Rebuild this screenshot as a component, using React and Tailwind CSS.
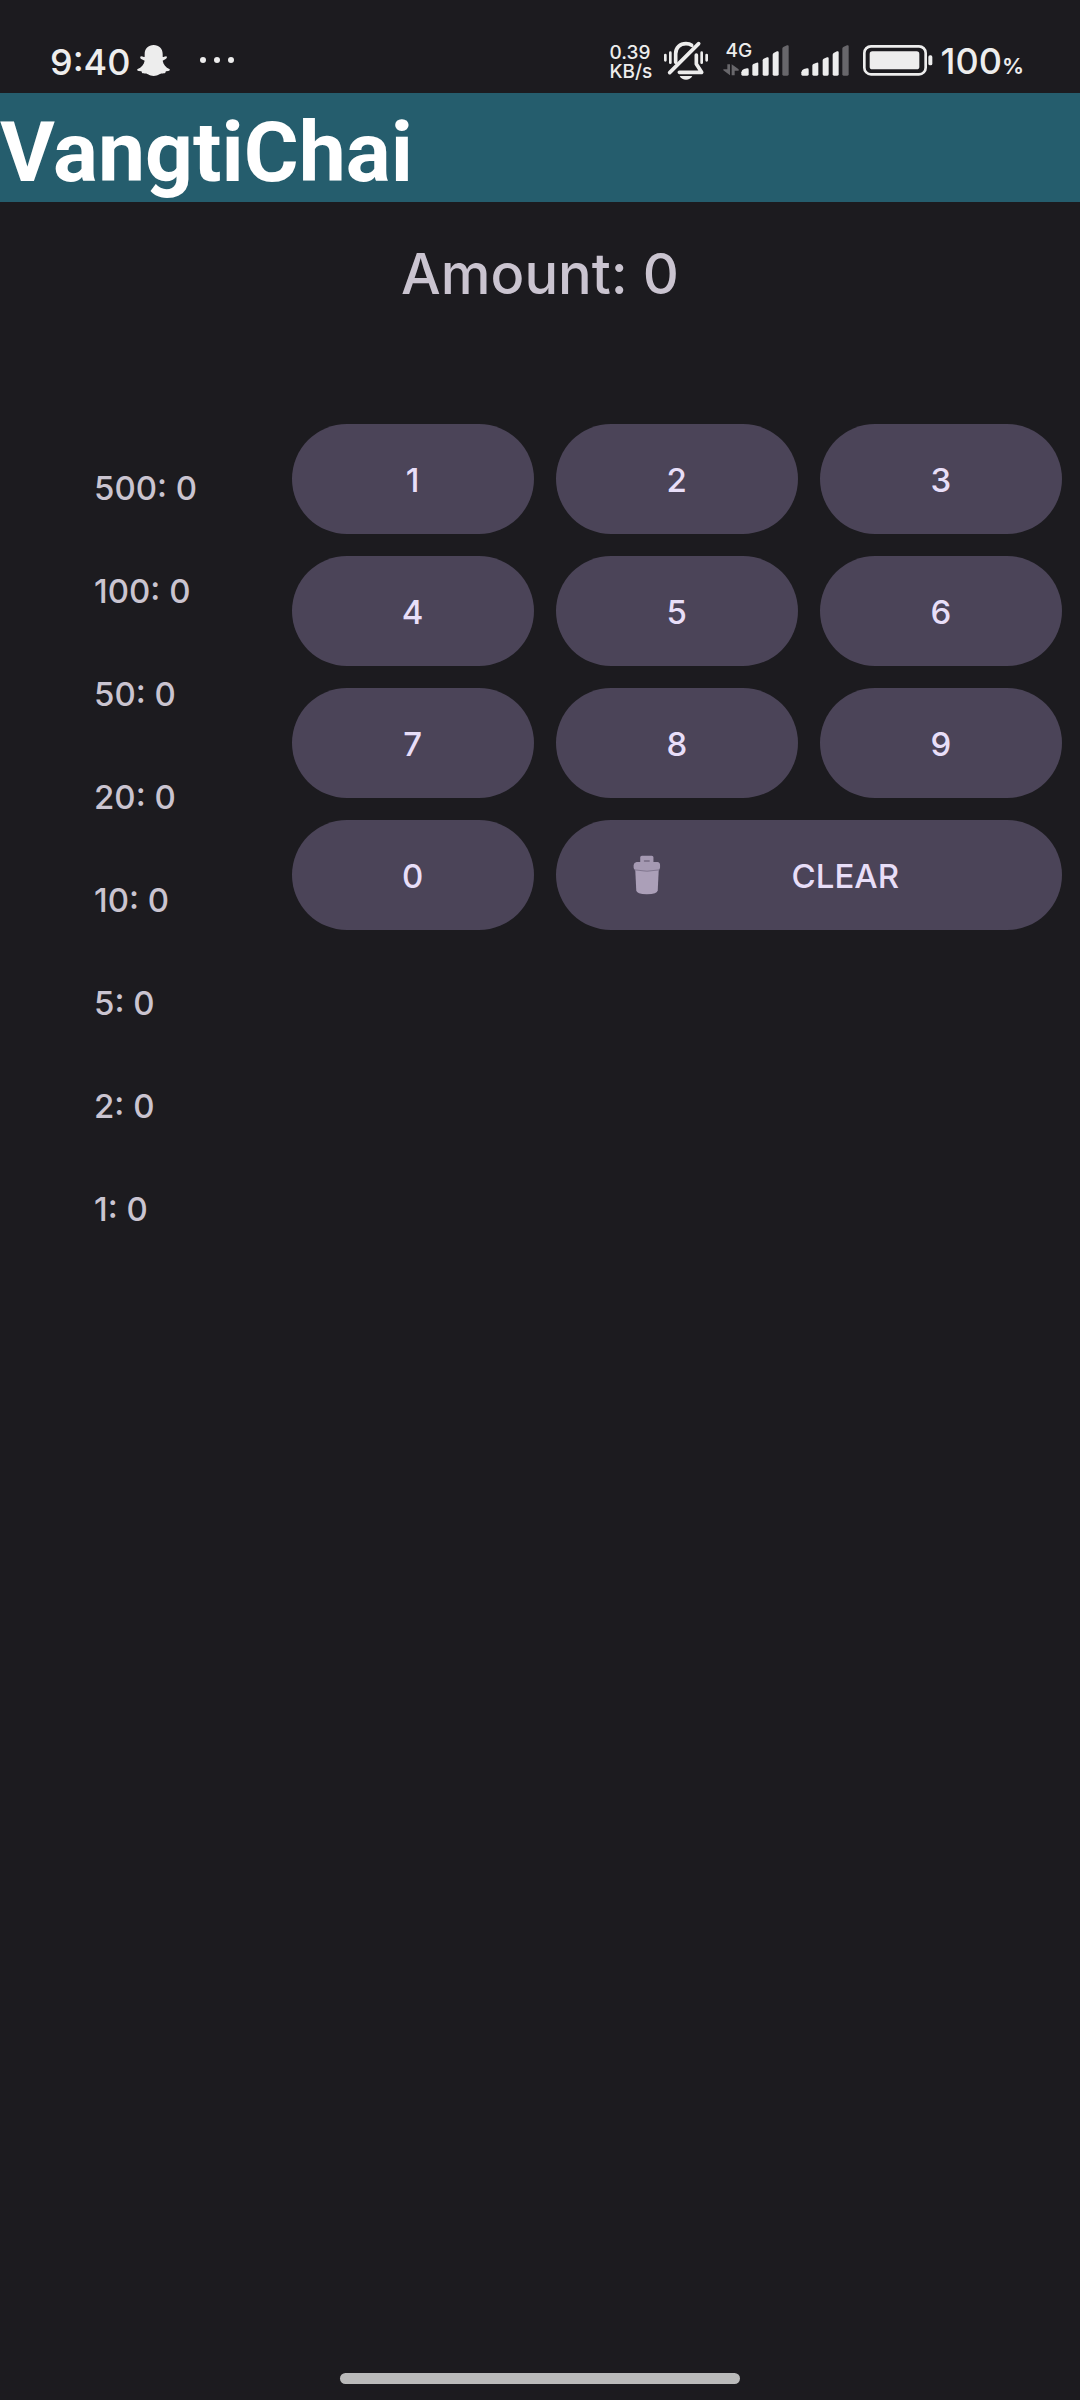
import { useState } from "react";

const NOTES = [500, 100, 50, 20, 10, 5, 2, 1];
const DIGITS = [1, 2, 3, 4, 5, 6, 7, 8, 9, 0];

function GhostIcon() {
  return (
    <svg className="h-[31px] w-[33px]" viewBox="0 0 99 93" fill="#ededed" aria-hidden="true">
      <path d="M50 0C66 0 77 11 77 27V35C80 37 84 34 88 34C91 36 90 40 85 43L77 47C79 58 87 68 97 72C100 74 98 77 94 78L87 79C85 81 86 84 83 85C77 86 72 84 67 88C62 92 56 93 50 93C44 93 38 92 33 88C28 84 23 86 17 85C14 84 15 81 13 79L5 78C0 77 -1 74 2 72C13 68 21 58 23 47L14 43C9 40 8 36 12 34C16 34 20 37 23 35V27C23 11 34 0 50 0Z" />
    </svg>
  );
}

function DotsIcon() {
  return (
    <svg className="h-[6px] w-[34px]" viewBox="0 0 34 6" fill="#ededed" aria-hidden="true">
      <circle cx="3" cy="3" r="3" />
      <circle cx="17" cy="3" r="3" />
      <circle cx="31" cy="3" r="3" />
    </svg>
  );
}

function BellMutedIcon() {
  return (
    <svg
      className="h-[41px] w-[48px]"
      viewBox="219 60 144 123"
      fill="none"
      stroke="#ededed"
      strokeWidth="11"
      strokeLinecap="round"
      strokeLinejoin="round"
      aria-hidden="true"
    >
      <path d="M242 158L329 71" />
      <path d="M260 127V101C260 83 273 71 291 71C298 71 304 73 308 76" />
      <path d="M322 105V132L338 157H271" />
      <path d="M272 168H310C306 176 299 179 291 179C283 179 276 176 272 168Z" fill="#ededed" stroke="none" />
      <path d="M229 105V121M244 98V128M338 98V128M353 105V121" strokeWidth="8" />
    </svg>
  );
}

function SignalBars() {
  return (
    <svg className="h-[31px] w-[48px]" viewBox="457 75 144 93" fill="#ededed" aria-hidden="true">
      <path d="M458 163V157Q459 150 466 147L475 145Q480 144 480 149V163Q480 167 476 167H462Q458 167 458 163Z" />
      <path d="M491 163V137Q491 134 494 132L504 128Q509 126 509 131V163Q509 167 505 167H495Q491 167 491 163Z" />
      <path d="M522 163V121Q522 118 525 116L535 112Q540 110 540 115V163Q540 167 536 167H526Q522 167 522 163Z" />
      <path d="M552 163V104Q552 101 555 99L565 94Q570 92 570 97V163Q570 167 566 167H556Q552 167 552 163Z" />
      <path d="M581 163V86Q581 83 584 81L595 76Q600 74 600 79V163Q600 167 596 167H585Q581 167 581 163Z" fill="#68676b" />
    </svg>
  );
}

function DataArrows() {
  return (
    <svg className="h-[12px] w-[16px]" viewBox="400 131 48 36" fill="#68676b" aria-hidden="true">
      <path d="M413 132H421V165L401 150V147H413Z" />
      <path d="M426 165V132L447 147V151H435V165Z" />
    </svg>
  );
}

function BatteryIcon() {
  return (
    <svg className="h-[31px] w-[70px]" viewBox="191 74 210 93" aria-hidden="true">
      <rect x="195" y="78" width="184" height="84" rx="20" fill="none" stroke="#ededed" strokeWidth="8" />
      <rect x="211" y="93" width="149" height="54" rx="8" fill="#ededed" />
      <rect x="387" y="105" width="12" height="30" rx="5" fill="#ededed" />
    </svg>
  );
}

function TrashIcon() {
  return (
    <svg className="h-[40px] w-[28px]" viewBox="270 162 83 121" aria-hidden="true">
      <path d="M276 207H347L344 269Q343 281 311 281Q280 281 279 269Z" fill="#ab9fb8" />
      <path d="M296 164H326Q331 164 331 169V183H343Q351 184 351 192V200Q350 209 341 209Q311 215 281 209Q272 208 271 200V192Q272 184 280 183H291V169Q291 164 296 164Z" fill="#a599b2" />
      <path d="M274 207Q311 215 349 207" fill="none" stroke="#81768f" strokeWidth="3" />
      <rect x="302" y="177" width="18" height="6" rx="2" fill="#80758d" />
    </svg>
  );
}

function StatusBar() {
  return (
    <div className="flex h-[93px] items-start justify-between pl-[50px] pr-14 pt-10 font-medium text-[#ededed]">
      <div className="flex h-10 items-center">
        <span className="w-[87px] pt-1 text-[36px] leading-10">9:40</span>
        <GhostIcon />
        <span className="ml-[30px]"><DotsIcon /></span>
      </div>
      <div className="flex h-10 items-center">
        <div className="w-[53px] pt-1 text-[19px] leading-[19px]">
          <div>0.39</div>
          <div>KB/s</div>
        </div>
        <BellMutedIcon />
        <div className="relative ml-[13px] flex items-end">
          <span className="absolute -top-1 left-[2px] text-[19px] leading-5">4G</span>
          <DataArrows />
          <span className="ml-[2px]"><SignalBars /></span>
        </div>
        <span className="ml-3 mr-[14px]"><SignalBars /></span>
        <BatteryIcon />
        <span className="ml-[7px] pt-[6px] text-[36px] leading-10">100<span className="text-[22px] font-semibold">%</span></span>
      </div>
    </div>
  );
}

const KEY =
  "flex h-[110px] items-center justify-center rounded-full bg-[#4b4458] pt-[3px] text-[33px] font-medium text-[#e8def8]";

export default function App() {
  const [amount, setAmount] = useState(0);

  let rest = amount;
  const change = NOTES.map((note) => {
    const count = Math.floor(rest / note);
    rest -= count * note;
    return { note, count };
  });

  return (
    <div className="flex min-h-screen flex-col bg-[#1c1b1f] font-['Inter',sans-serif]">
      <StatusBar />
      <header className="bg-[#255d6d]">
        <h1 className="pt-[10px] font-['Roboto',sans-serif] text-[84px] font-bold leading-[99px] text-white">VangtiChai</h1>
      </header>
      <main>
        <p className="pt-9 text-center text-[56px] font-medium leading-[72px] text-[#cac4d0]">
          Amount: {amount}
        </p>
        <div className="mt-[114px] flex items-start">
          <ul className="w-[27%] shrink-0 pl-[94px] pt-[13px] text-[33px] font-medium leading-[103px] text-[#cac4d0]">
            {change.map(({ note, count }) => (
              <li key={note}>{note}: {count}</li>
            ))}
          </ul>
          <div className="grid flex-1 grid-cols-3 gap-[22px] pr-[18px]">
            {DIGITS.map((digit) => (
              <button key={digit} type="button" className={KEY} onClick={() => setAmount(amount * 10 + digit)}>
                {digit}
              </button>
            ))}
            <button
              type="button"
              className="col-span-2 flex h-[110px] items-center rounded-full bg-[#4b4458] pl-[77px] pr-8 text-[33px] font-medium text-[#e8def8]"
              onClick={() => setAmount(0)}
            >
              <TrashIcon />
              <span className="flex-1 pt-[3px]">CLEAR</span>
            </button>
          </div>
        </div>
      </main>
      <div className="mx-auto mb-4 mt-auto h-[11px] w-[37%] rounded-full bg-[#bababa]" />
    </div>
  );
}
